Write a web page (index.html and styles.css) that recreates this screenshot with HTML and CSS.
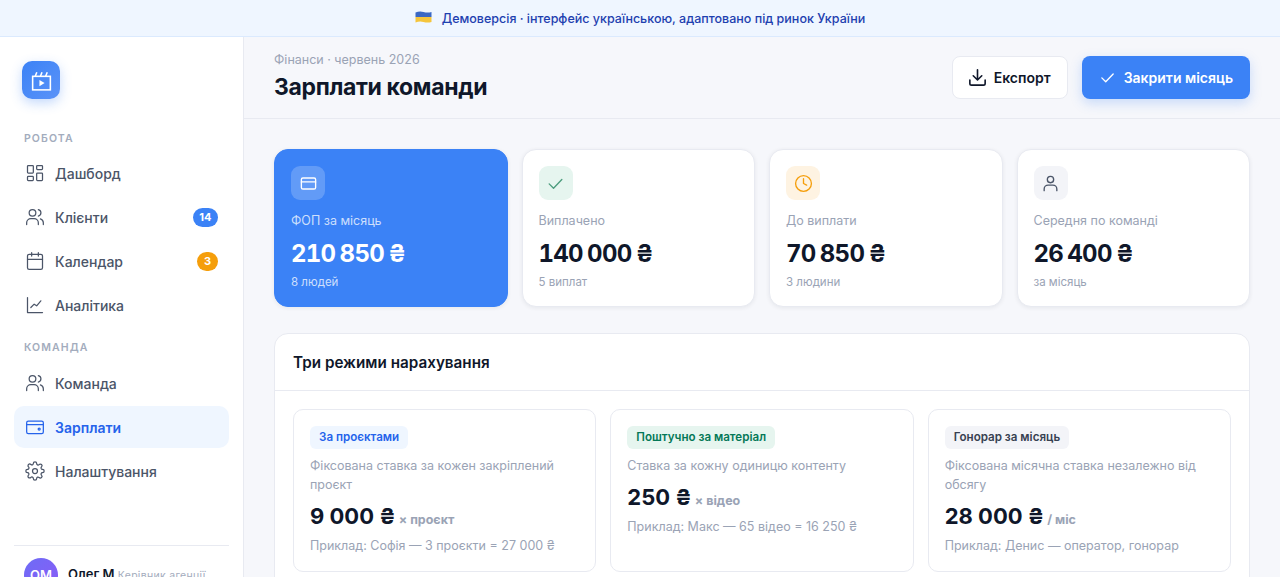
FILE: index.html
```html
<!DOCTYPE html>
<html lang="uk">
<head>
  <meta charset="UTF-8">
  <title>Зарплати команди</title>
  <meta name="viewport" content="width=device-width, initial-scale=1.0">
  <link rel="stylesheet" href="styles.css">
</head>
<body>

<!-- Demo banner -->
<div class="banner">
  <svg class="flag" viewBox="0 0 16 12"><path d="M0 1.5 Q4 0 8 1 T16 1V6H0Z" fill="#3b68c4"/><path d="M0 6H16V11Q12 12 8 11T0 11.5Z" fill="#f5c53c"/></svg>
  <span>Демоверсія · інтерфейс українською, адаптовано під ринок України</span>
</div>

<div class="layout">

  <!-- Sidebar -->
  <aside class="sidebar">
    <div class="logo">
      <svg viewBox="0 0 24 24" fill="none" stroke="#fff" stroke-width="1.5"><rect x="3.5" y="8" width="17" height="13"/><path d="M6 8l1.5-4M11 8l1.5-4M16 8l1.5-4"/><path d="M10 11.5v6l5-3z" fill="#fff" stroke="none"/></svg>
    </div>

    <div class="nav-label">РОБОТА</div>
    <a class="nav-item">
      <svg class="nav-icon" viewBox="0 0 24 24"><rect x="3" y="3" width="7" height="9" rx="1"/><rect x="14" y="3" width="7" height="5" rx="1"/><rect x="14" y="12" width="7" height="9" rx="1"/><rect x="3" y="16" width="7" height="5" rx="1"/></svg>
      Дашборд
    </a>
    <a class="nav-item">
      <svg class="nav-icon" viewBox="0 0 24 24"><circle cx="9" cy="7" r="4"/><path d="M2 21v-2a5 5 0 0 1 5-5h4a5 5 0 0 1 5 5v2"/><path d="M16 3.1a4 4 0 0 1 0 7.8"/><path d="M22 21v-2a5 5 0 0 0-3.5-4.7"/></svg>
      Клієнти
      <span class="count count-blue">14</span>
    </a>
    <a class="nav-item">
      <svg class="nav-icon" viewBox="0 0 24 24"><rect x="3" y="4" width="18" height="18" rx="2"/><path d="M16 2v4M8 2v4M3 10h18"/></svg>
      Календар
      <span class="count count-orange">3</span>
    </a>
    <a class="nav-item">
      <svg class="nav-icon" viewBox="0 0 24 24"><path d="M3 3v18h18"/><path d="M7 15l4-4 3 2 5-6"/></svg>
      Аналітика
    </a>

    <div class="nav-label nav-label-second">КОМАНДА</div>
    <a class="nav-item">
      <svg class="nav-icon" viewBox="0 0 24 24"><circle cx="9" cy="7" r="4"/><path d="M2 21v-2a5 5 0 0 1 5-5h4a5 5 0 0 1 5 5v2"/><path d="M16 3.1a4 4 0 0 1 0 7.8"/><path d="M22 21v-2a5 5 0 0 0-3.5-4.7"/></svg>
      Команда
    </a>
    <a class="nav-item active">
      <svg class="nav-icon" viewBox="0 0 24 24"><rect x="2" y="5" width="20" height="15" rx="2"/><path d="M2 9h20"/><circle cx="17" cy="14.5" r="1.2"/></svg>
      Зарплати
    </a>
    <a class="nav-item">
      <svg class="nav-icon" viewBox="0 0 24 24"><circle cx="12" cy="12" r="3"/><path d="M19.4 15a1.7 1.7 0 0 0 .3 1.8l.1.1a2 2 0 1 1-2.9 2.9l-.1-.1a1.7 1.7 0 0 0-2.8 1.2V21a2 2 0 0 1-4 0v-.1a1.7 1.7 0 0 0-2.9-1.2l-.1.1a2 2 0 1 1-2.8-2.9l.1-.1a1.7 1.7 0 0 0-1.2-2.8H3a2 2 0 0 1 0-4h.1a1.7 1.7 0 0 0 1.2-2.9l-.1-.1a2 2 0 1 1 2.9-2.8l.1.1a1.7 1.7 0 0 0 1.8.3H9a1.7 1.7 0 0 0 1-1.5V3a2 2 0 0 1 4 0v.1a1.7 1.7 0 0 0 2.9 1.2l.1-.1a2 2 0 1 1 2.8 2.9l-.1.1a1.7 1.7 0 0 0-.3 1.8V9a1.7 1.7 0 0 0 1.5 1H21a2 2 0 0 1 0 4h-.1a1.7 1.7 0 0 0-1.5 1z"/></svg>
      Налаштування
    </a>

    <div class="user">
      <div class="avatar">ОМ</div>
      <div class="user-name">Олег М <small>Керівник агенції</small></div>
    </div>
  </aside>

  <!-- Main -->
  <main class="main">
    <header class="topbar">
      <div>
        <div class="crumb">Фінанси · червень 2026</div>
        <h1>Зарплати команди</h1>
      </div>
      <div class="actions">
        <button class="btn btn-light">
          <svg viewBox="2 2 20 20"><path d="M12 3v12M7 10l5 5 5-5M3 15v4a2 2 0 0 0 2 2h14a2 2 0 0 0 2-2v-4"/></svg>
          Експорт
        </button>
        <button class="btn btn-primary">
          <svg viewBox="0 0 24 24"><path d="M4 12.5l5.5 5.5L20 7"/></svg>
          Закрити місяць
        </button>
      </div>
    </header>

    <div class="content">
      <!-- Stats -->
      <div class="stats">
        <div class="stat stat-blue">
          <div class="stat-icon icon-glass">
            <svg viewBox="0 0 24 24"><rect x="3" y="5" width="18" height="14" rx="2"/><path d="M3 10h18"/></svg>
          </div>
          <div class="stat-label">ФОП за місяць</div>
          <div class="stat-value">210 850 ₴</div>
          <div class="stat-note">8 людей</div>
        </div>
        <div class="stat">
          <div class="stat-icon icon-green">
            <svg viewBox="0 0 24 24"><path d="M4 12.5l5.5 5.5L20 7"/></svg>
          </div>
          <div class="stat-label">Виплачено</div>
          <div class="stat-value">140 000 ₴</div>
          <div class="stat-note">5 виплат</div>
        </div>
        <div class="stat">
          <div class="stat-icon icon-orange">
            <svg viewBox="0 0 24 24"><circle cx="12" cy="12" r="10"/><path d="M12 6v6l4 2"/></svg>
          </div>
          <div class="stat-label">До виплати</div>
          <div class="stat-value">70 850 ₴</div>
          <div class="stat-note">3 людини</div>
        </div>
        <div class="stat">
          <div class="stat-icon icon-grey">
            <svg viewBox="0 0 24 24"><circle cx="12" cy="7" r="4"/><path d="M4 21v-2a5 5 0 0 1 5-5h6a5 5 0 0 1 5 5v2"/></svg>
          </div>
          <div class="stat-label">Середня по команді</div>
          <div class="stat-value">26 400 ₴</div>
          <div class="stat-note">за місяць</div>
        </div>
      </div>

      <!-- Pay modes -->
      <section class="panel">
        <div class="panel-head">Три режими нарахування</div>
        <div class="modes">
          <div class="mode">
            <span class="tag tag-blue">За проєктами</span>
            <p class="mode-desc">Фіксована ставка за кожен закріплений проєкт</p>
            <div class="mode-price">9 000 ₴ <small>× проєкт</small></div>
            <p class="mode-example">Приклад: Софія — 3 проєкти = 27 000 ₴</p>
          </div>
          <div class="mode">
            <span class="tag tag-green">Поштучно за матеріал</span>
            <p class="mode-desc">Ставка за кожну одиницю контенту</p>
            <div class="mode-price">250 ₴ <small>× відео</small></div>
            <p class="mode-example">Приклад: Макс — 65 відео = 16 250 ₴</p>
          </div>
          <div class="mode">
            <span class="tag tag-grey">Гонорар за місяць</span>
            <p class="mode-desc">Фіксована місячна ставка незалежно від обсягу</p>
            <div class="mode-price">28 000 ₴ <small>/ міс</small></div>
            <p class="mode-example">Приклад: Денис — оператор, гонорар</p>
          </div>
        </div>
      </section>
    </div>
  </main>
</div>

</body>
</html>
```

FILE: styles.css
```css
* { box-sizing: border-box; }

html, body { height: 100%; overflow: hidden; }

body {
  margin: 0;
  font-family: Inter, "Liberation Sans", sans-serif;
  background: #f6f7fb;
  color: #0f172a;
}

/* Banner */
.banner {
  height: 37px;
  display: flex;
  align-items: center;
  justify-content: center;
  gap: 10px;
  background: #eff6ff;
  border-bottom: 1px solid #dbeafe;
  color: #1e40af;
  font-size: 12.5px;
  font-weight: 500;
}
.flag { width: 17px; height: 12px; margin-top: -2px; }

.layout { display: flex; }

/* Sidebar */
.sidebar {
  width: 244px;
  flex: none;
  height: 600px;
  background: #fff;
  border-right: 1px solid #e8eaf1;
  padding: 24px 14px 0;
}

.logo {
  width: 38px;
  height: 38px;
  margin-left: 8px;
  margin-bottom: 33px;
  border-radius: 10px;
  background: linear-gradient(135deg, #3b82f6, #5b93f8);
  box-shadow: 0 4px 12px rgba(59,130,246,0.3);
  display: flex;
  align-items: center;
  justify-content: center;
}
.logo svg { width: 25px; height: 25px; }

.nav-label {
  padding-left: 10px;
  margin-bottom: 7px;
  font-size: 10.5px;
  line-height: 13px;
  font-weight: 600;
  letter-spacing: 1.1px;
  color: #a3acbd;
}
.nav-label-second { margin-top: 15px; margin-bottom: 8px; }

.nav-item {
  height: 42px;
  margin-bottom: 2px;
  padding: 0 11px;
  display: flex;
  align-items: center;
  gap: 10px;
  border-radius: 10px;
  font-size: 14px;
  font-weight: 500;
  color: #4b5568;
}
.nav-item.active { background: #eff6ff; color: #2563eb; font-weight: 600; }

.nav-icon {
  width: 20px;
  height: 20px;
  fill: none;
  stroke: currentColor;
  stroke-width: 1.5;
  stroke-linecap: round;
  stroke-linejoin: round;
}

.count {
  margin-left: auto;
  height: 19px;
  min-width: 21px;
  padding: 0 6.5px;
  border-radius: 10px;
  display: flex;
  align-items: center;
  justify-content: center;
  color: #fff;
  font-size: 11px;
  font-weight: 700;
}
.count-blue { background: #3b82f6; }
.count-orange { background: #f59e0b; }

.user {
  margin-top: 53px;
  padding: 12px 10px 0;
  border-top: 1px solid #e8eaf1;
  display: flex;
  gap: 10px;
}
.avatar {
  width: 34px;
  height: 34px;
  flex: none;
  border-radius: 50%;
  background: linear-gradient(135deg, #6d6cf6, #8b5cf6);
  color: #fff;
  font-size: 13px;
  font-weight: 600;
  display: flex;
  align-items: center;
  justify-content: center;
}
.user-name { font-size: 13px; font-weight: 600; line-height: 16px; padding-top: 8px; white-space: nowrap; }
.user-name small { font-size: 10.5px; font-weight: 400; color: #a3acbd; letter-spacing: 0.3px; }

/* Main */
.main { flex: 1; min-width: 0; }

.topbar {
  height: 82px;
  padding: 15px 30px 0;
  display: flex;
  justify-content: space-between;
  border-bottom: 1px solid #e8eaf1;
}
.crumb { font-size: 12.5px; line-height: 16px; color: #9aa3b5; }
h1 { margin: 4px 0 0; font-size: 23px; line-height: 30px; font-weight: 700; letter-spacing: -0.35px; }

.actions { display: flex; gap: 14px; padding-top: 4px; align-items: flex-start; }

.btn {
  height: 43px;
  display: flex;
  align-items: center;
  gap: 8px;
  border-radius: 8px;
  font-family: inherit;
  font-size: 14px;
  font-weight: 600;
}
.btn svg {
  width: 17px;
  height: 17px;
  fill: none;
  stroke: currentColor;
  stroke-width: 1.9;
  stroke-linecap: round;
  stroke-linejoin: round;
}
.btn-light { padding: 0 16px; background: #fff; border: 1px solid #e8eaf1; color: #0f172a; }
.btn-primary { padding: 0 17px; background: #3b82f6; border: none; color: #fff; box-shadow: 0 4px 12px rgba(59,130,246,0.25); }

.content { padding: 30px 30px 0; }

/* Stats */
.stats { display: grid; grid-template-columns: repeat(4, 1fr); gap: 14px; }

.stat {
  height: 158px;
  padding: 16px 16px;
  background: #fff;
  border: 1px solid #e8eaf1;
  border-radius: 14px;
  box-shadow: 0 1px 4px rgba(15,23,42,0.07);
}
.stat-blue { background: #3b82f6; border-color: #3b82f6; color: #fff; }

.stat-icon {
  width: 34px;
  height: 34px;
  margin-bottom: 13px;
  border-radius: 9px;
  display: flex;
  align-items: center;
  justify-content: center;
}
.stat-icon svg {
  width: 19px;
  height: 19px;
  fill: none;
  stroke: currentColor;
  stroke-width: 1.7;
  stroke-linecap: round;
  stroke-linejoin: round;
}
.icon-glass { background: rgba(255,255,255,0.2); color: #fff; }
.icon-green { background: #e6f5ef; color: #4d9d7e; }
.icon-orange { background: #fef3e2; color: #f59e0b; }
.icon-grey { background: #f3f4f8; color: #4b5568; }

.stat-label { font-size: 12.5px; line-height: 16px; color: #9aa3b5; }
.stat-value {
  margin-top: 10px;
  font-size: 24px;
  line-height: 30px;
  font-weight: 700;
  font-variant-numeric: tabular-nums;
  letter-spacing: -0.72px;
  word-spacing: -1.5px;
}
.stat-note { margin-top: 5px; font-size: 11.5px; line-height: 16px; color: #9aa3b5; }
.stat-blue .stat-label, .stat-blue .stat-note { color: rgba(255,255,255,0.75); }

/* Panel */
.panel {
  margin-top: 26px;
  background: #fff;
  border: 1px solid #e8eaf1;
  border-radius: 14px;
}
.panel-head {
  height: 57px;
  padding-left: 18px;
  display: flex;
  align-items: center;
  border-bottom: 1px solid #e8eaf1;
  font-size: 15.25px;
  font-weight: 600;
}

.modes { display: grid; grid-template-columns: repeat(3, 1fr); gap: 14px; padding: 18px; }

.mode {
  height: 163px;
  padding: 16px 16px 0;
  border: 1px solid #e8eaf1;
  border-radius: 10px;
}

.tag {
  display: block;
  width: fit-content;
  height: 23px;
  padding: 0 9px;
  border-radius: 6px;
  font-size: 11.6px;
  line-height: 22px;
  font-weight: 600;
}
.tag-blue { background: #eff6ff; color: #2563eb; }
.tag-green { background: #e6f5ef; color: #047857; }
.tag-grey { background: #f3f4f8; color: #374151; }

.mode-desc { margin: 7px 0 0; font-size: 12.5px; line-height: 19px; color: #9aa3b5; }
.mode-price { margin-top: 7px; font-size: 22px; line-height: 30px; font-weight: 700; }
.mode-price small { margin-left: -2px; font-size: 12.5px; font-weight: 700; color: #9aa3b5; }
.mode-example { margin: 3px 0 0; font-size: 12.5px; line-height: 16px; color: #9aa3b5; }
```
